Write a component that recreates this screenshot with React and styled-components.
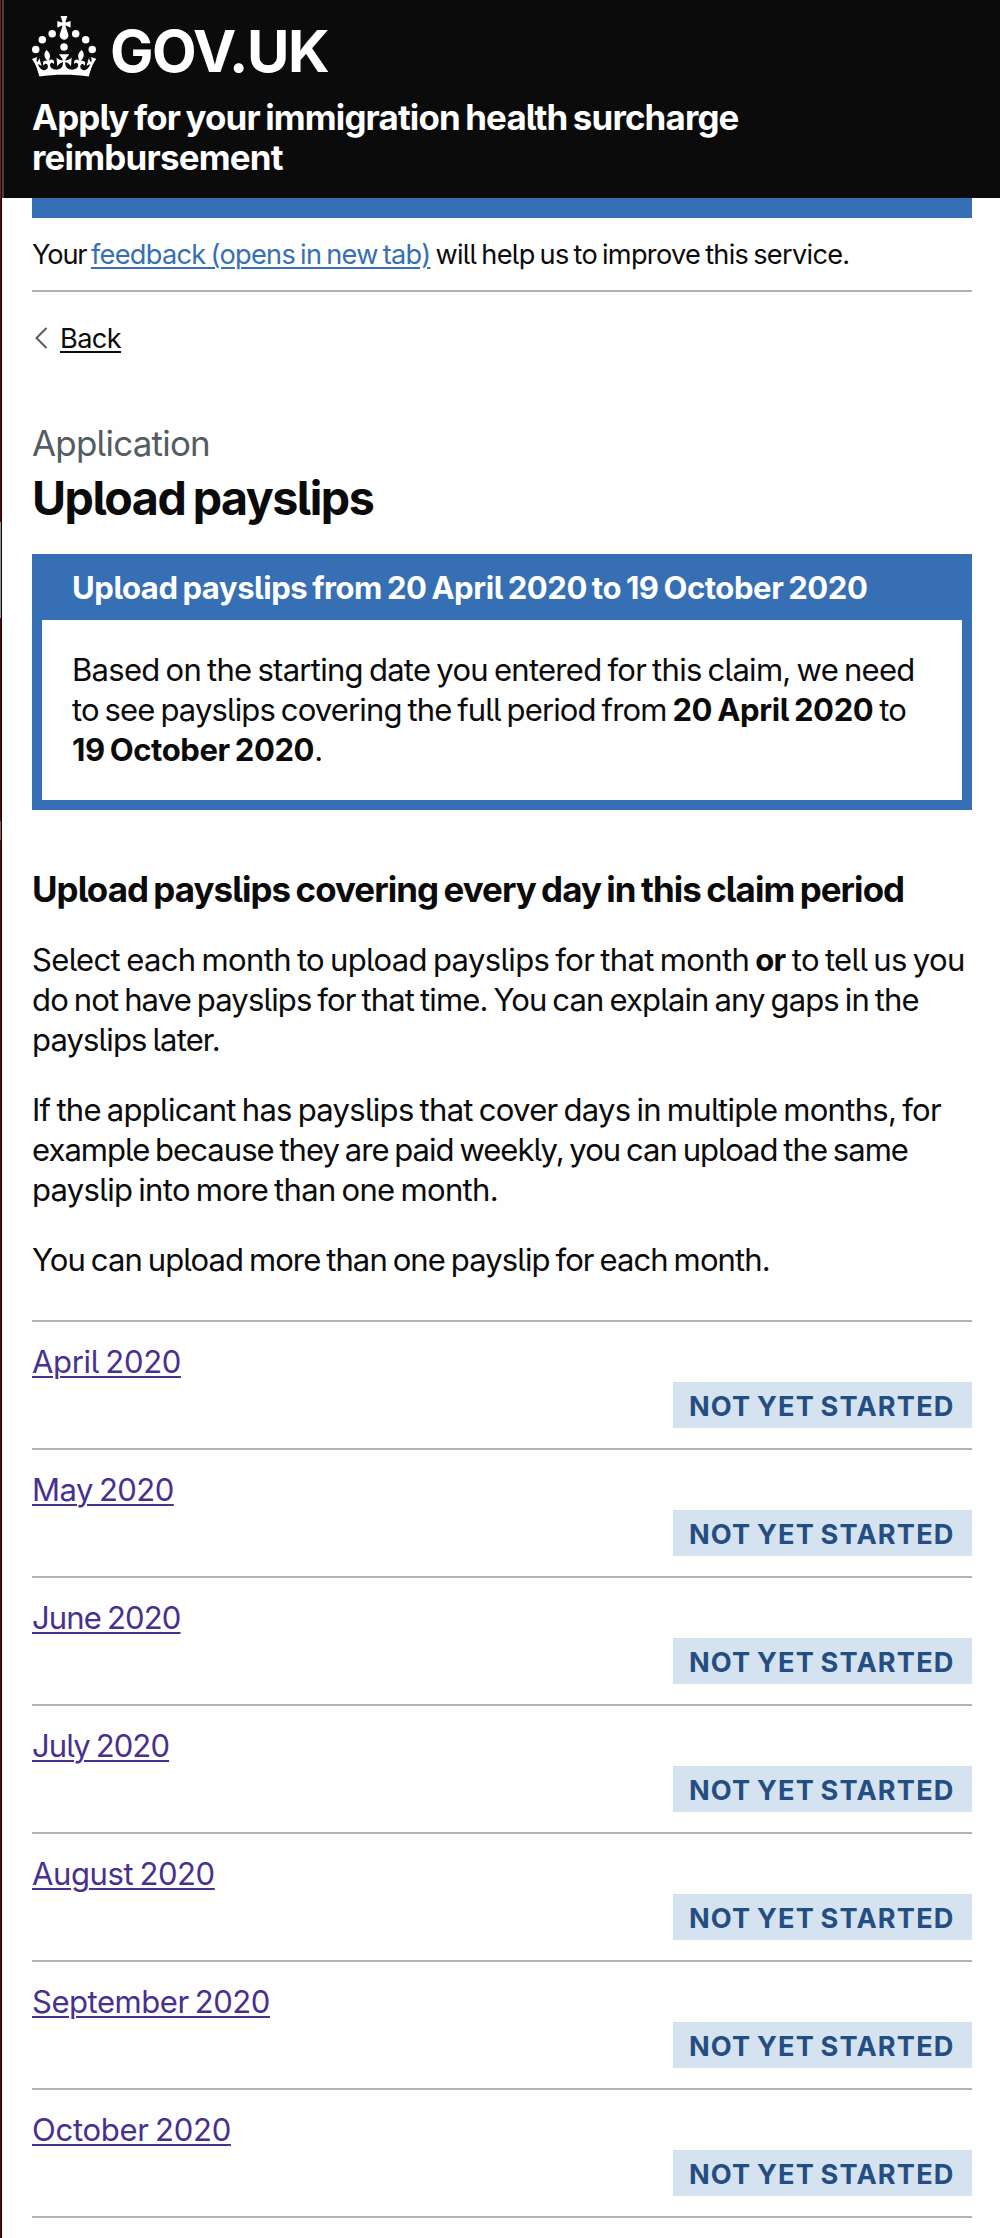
import React from "react";
import styled, { createGlobalStyle } from "styled-components";

const colors = {
  ink: "#0b0b0b",
  blue: "#366fb4",
  border: "#b2b2b2",
  secondary: "#525c61",
  visited: "#48308f",
  tagText: "#244e81",
  tagFill: "#d5e2ef",
};

const GlobalStyle = createGlobalStyle`
  html, body { margin: 0; padding: 0; background: #fefefe; }
  *, *::before, *::after { box-sizing: border-box; }
  body {
    font-family: Inter, "Liberation Sans", sans-serif;
    font-feature-settings: "cv05" 1;
    word-spacing: -2px;
    color: ${colors.ink};
  }
`;

const Screen = styled.div`
  display: grid;
  grid-template-columns: 1px 1px 1fr;
  width: 1000px;
  height: 2238px;
  overflow: hidden;
`;

const WindowEdge = styled.div`
  background: linear-gradient(
    #7d1a12 0 198px,
    #5e0b08 198px 522px,
    #8f999d 522px 618px,
    #5a0604 618px 821px,
    #8a5a5c 821px 840px,
    #5e0b08 840px
  );
`;

const WindowShadow = styled.div`
  background: #140000;
`;

const Header = styled.header`
  height: 198px;
  padding: 16px 28px 0;
  border-left: 2px solid #424242;
  background: ${colors.ink};
  color: #fff;
`;

const Logo = styled.a`
  display: flex;
  align-items: flex-start;
  gap: 14px;
  height: 60px;
`;

const Crown = styled.svg`
  width: 64px;
  height: 61px;
  fill: currentColor;
`;

const Wordmark = styled.span`
  font-size: 58px;
  font-weight: 700;
  line-height: 70px;
  letter-spacing: -1.5px;
`;

const ServiceName = styled.div`
  margin-top: 21px;
  font-size: 34.92px;
  font-weight: 700;
  line-height: 40px;
`;

const Container = styled.main`
  margin: 0 28px 0 30px;
`;

const AccentBar = styled.div`
  height: 20px;
  background: ${colors.blue};
`;

const PhaseBanner = styled.div`
  padding: 17px 0 15px;
  border-bottom: 2px solid ${colors.border};
  font-size: 27.16px;
  line-height: 40px;
`;

const Line = styled.span`
  display: block;
  white-space: pre;
  letter-spacing: ${(p) => p.$track}px;
`;

const Run = styled.span`
  white-space: pre;
  letter-spacing: ${(p) => p.$track}px;
`;

const Strong = styled.strong`
  font-weight: 700;
  letter-spacing: ${(p) => p.$track}px;
`;

const Link = styled.a`
  color: ${(p) => p.$color};
  letter-spacing: ${(p) => p.$track}px;
  text-decoration: underline;
  text-decoration-thickness: 2px;
  text-underline-offset: 3px;
`;

const BackRow = styled.nav`
  display: flex;
  align-items: flex-start;
  margin-top: 27px;
  font-size: 27.16px;
  line-height: 40px;
`;

const Chevron = styled.svg`
  flex: none;
  width: 13px;
  height: 24px;
  margin: 7px 12px 0 3px;
  fill: none;
  stroke: ${colors.secondary};
  stroke-width: 2;
`;

const Caption = styled.div`
  margin-top: 64px;
  color: ${colors.secondary};
  font-size: 34.92px;
  line-height: 40px;
  letter-spacing: -0.75px;
`;

const PageTitle = styled.h1`
  margin: 10px 0 31px;
  font-size: 46.56px;
  line-height: 50px;
  letter-spacing: -1.5px;
`;

const Notice = styled.section`
  border: 10px solid ${colors.blue};
  border-top-width: 0;
`;

const NoticeTitle = styled.h2`
  margin: 0;
  padding: 14px 30px 12px;
  background: ${colors.blue};
  color: #fff;
  font-size: 31.04px;
  line-height: 40px;
  letter-spacing: -0.44px;
`;

const NoticeBody = styled.div`
  padding: 30px;
  font-size: 31.04px;
  line-height: 40px;
`;

const SectionTitle = styled.h2`
  margin: 59px 0 0;
  font-size: 34.92px;
  line-height: 40px;
  letter-spacing: -0.94px;
  white-space: nowrap;
`;

const Copy = styled.div`
  display: flex;
  flex-direction: column;
  gap: 30px;
  margin-top: 31px;
`;

const Paragraph = styled.p`
  margin: 0;
  font-size: 31.04px;
  line-height: 40px;
`;

const TaskList = styled.ul`
  margin: 40px 0 0;
  padding: 0;
  list-style: none;
  border-top: 2px solid ${colors.border};
`;

const Task = styled.li`
  display: flex;
  flex-direction: column;
  height: 128px;
  padding: 20px 0;
  border-bottom: 2px solid ${colors.border};
  font-size: 31.04px;
  line-height: 40px;
`;

const TaskName = styled.div`
  height: 40px;
`;

const Tag = styled.strong`
  align-self: flex-end;
  width: 299px;
  height: 46px;
  padding: 3px 0 0 16px;
  background: ${colors.tagFill};
  color: ${colors.tagText};
  font-size: 27.16px;
  line-height: 43px;
  letter-spacing: 1.17px;
  white-space: nowrap;
`;

const months = [
  { name: "April 2020", track: -0.34 },
  { name: "May 2020", track: -0.55 },
  { name: "June 2020", track: -0.86 },
  { name: "July 2020", track: -0.9 },
  { name: "August 2020", track: -0.42 },
  { name: "September 2020", track: -0.48 },
  { name: "October 2020", track: -0.29 },
];

function CrownIcon() {
  return (
    <Crown viewBox="0 0 63.4 60.4" aria-hidden="true">
      <circle cx="20" cy="17.6" r="3.7" />
      <circle cx="10.2" cy="23.5" r="3.7" />
      <circle cx="3.7" cy="33.2" r="3.7" />
      <circle cx="31.7" cy="30.6" r="3.7" />
      <circle cx="43.3" cy="17.6" r="3.7" />
      <circle cx="53.2" cy="23.5" r="3.7" />
      <circle cx="59.7" cy="33.2" r="3.7" />
      <path d="M33.1,9.8c.2-.1.3-.3.5-.5l4.6,2.4v-6.8l-4.6,1.5c-.1-.2-.3-.3-.5-.5l1.9-5.9h-6.7l1.9,5.9c-.2.1-.3.3-.5.5l-4.6-1.5v6.8l4.6-2.4c.1.2.3.3.5.5l-2.6,8c-.9,2.8,1.2,5.7,4.1,5.7h0c3,0,5.1-2.9,4.1-5.7l-2.6-8ZM37,37.9s-3.4,3.8-4.1,6.1c2.2,0,4.2-.5,6.4-2.8l-.7,8.5c-2-2.8-4.4-4.1-5.7-3.8.1,3.1.5,6.7,5.8,7.2,3.7.3,6.7-1.5,7-3.8.4-2.6-2-4.3-3.7-1.6-1.4-4.5,2.4-6.1,4.9-3.2-1.9-4.5-1.8-7.7,2.4-10.9,3,4,2.6,7.3-1.2,11.1,2.4-1.3,6.2,0,4,4.6-1.2-2.8-3.7-2.2-4.2.2-.3,1.7.7,3.7,3,4.2,1.9.3,4.7-.9,7-5.9-1.3,0-2.4.7-3.9,1.7l2.4-8c.6,2.3,1.4,3.7,2.2,4.5.6-1.6.5-2.8,0-5.3l5,1.8c-2.6,3.6-5.2,8.7-7.3,17.5-7.4-1.1-15.7-1.7-24.5-1.7h0c-8.8,0-17.1.6-24.5,1.7-2.1-8.9-4.7-13.9-7.3-17.5l5-1.8c-.5,2.5-.6,3.7,0,5.3.8-.8,1.6-2.3,2.2-4.5l2.4,8c-1.5-1-2.6-1.7-3.9-1.7,2.3,5,5.2,6.2,7,5.9,2.3-.4,3.3-2.4,3-4.2-.5-2.4-3-3.1-4.2-.2-2.2-4.6,1.6-6,4-4.6-3.7-3.7-4.2-7.1-1.2-11.1,4.2,3.2,4.3,6.4,2.4,10.9,2.5-2.8,6.3-1.3,4.9,3.2-1.8-2.7-4.1-1-3.7,1.6.3,2.3,3.3,4.1,7,3.8,5.4-.5,5.7-4.2,5.8-7.2-1.3-.2-3.7,1-5.7,3.8l-.7-8.5c2.2,2.3,4.2,2.7,6.4,2.8-.7-2.3-4.1-6.1-4.1-6.1h10.6,0Z" />
    </Crown>
  );
}

export default function App() {
  return (
    <>
      <GlobalStyle />
      <Screen>
        <WindowEdge />
        <WindowShadow />
        <div>
          <Header>
            <Logo>
              <CrownIcon />
              <Wordmark>GOV.UK</Wordmark>
            </Logo>
            <ServiceName>
              <Line $track={-0.86}>Apply for your immigration health surcharge</Line>
              <Line $track={-0.78}>reimbursement</Line>
            </ServiceName>
          </Header>
          <Container>
            <AccentBar />
            <PhaseBanner>
              <Run $track={-1.12}>{"Your "}</Run>
              <Link $color={colors.blue} $track={-0.69}>feedback (opens in new tab)</Link>
              <Run $track={-0.69}>{" will help us to improve this service."}</Run>
            </PhaseBanner>
            <BackRow>
              <Chevron viewBox="0 0 13 24" aria-hidden="true">
                <path d="M11.5 2 L1.5 12 L11.5 22" />
              </Chevron>
              <Link $color={colors.ink} $track={-0.6}>Back</Link>
            </BackRow>
            <Caption>Application</Caption>
            <PageTitle>Upload payslips</PageTitle>
            <Notice>
              <NoticeTitle>Upload payslips from 20 April 2020 to 19 October 2020</NoticeTitle>
              <NoticeBody>
                <Line $track={-0.73}>Based on the starting date you entered for this claim, we need</Line>
                <Line $track={-0.87}>
                  {"to see payslips covering the full period from "}
                  <Strong $track={-0.36}>20 April 2020</Strong>
                  {" to"}
                </Line>
                <Line $track={-0.54}>
                  <Strong $track={-0.4}>19 October 2020</Strong>.
                </Line>
              </NoticeBody>
            </Notice>
            <SectionTitle>Upload payslips covering every day in this claim period</SectionTitle>
            <Copy>
              <Paragraph>
                <Line $track={-0.66}>
                  {"Select each month to upload payslips for that month "}
                  <Strong $track={-0.6}>or</Strong>
                  {" to tell us you"}
                </Line>
                <Line $track={-0.86}>do not have payslips for that time. You can explain any gaps in the</Line>
                <Line $track={-0.87}>payslips later.</Line>
              </Paragraph>
              <Paragraph>
                <Line $track={-0.72}>If the applicant has payslips that cover days in multiple months, for</Line>
                <Line $track={-0.97}>example because they are paid weekly, you can upload the same</Line>
                <Line $track={-0.7}>payslip into more than one month.</Line>
              </Paragraph>
              <Paragraph>
                <Line $track={-0.9}>You can upload more than one payslip for each month.</Line>
              </Paragraph>
            </Copy>
            <TaskList>
              {months.map((month) => (
                <Task key={month.name}>
                  <TaskName>
                    <Link $color={colors.visited} $track={month.track}>{month.name}</Link>
                  </TaskName>
                  <Tag>NOT YET STARTED</Tag>
                </Task>
              ))}
            </TaskList>
          </Container>
        </div>
      </Screen>
    </>
  );
}
